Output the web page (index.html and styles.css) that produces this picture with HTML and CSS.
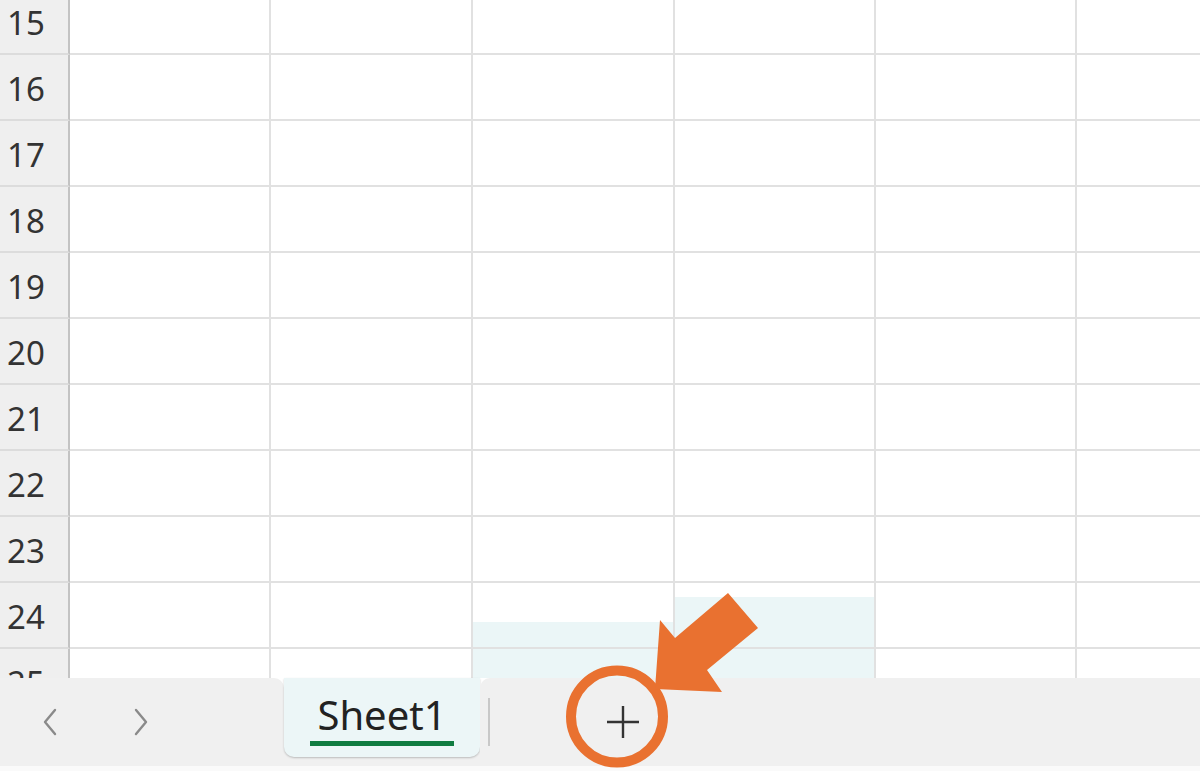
FILE: index.html
```html
<!DOCTYPE html>
<html lang="ja">
<head>
<meta charset="utf-8">
<title>Sheet</title>
<link rel="stylesheet" href="styles.css">
</head>
<body>
<div class="app">
  <div class="gridwrap">
    <div class="grid">
      <div class="rh">15</div><div class="c"></div><div class="c"></div><div class="c"></div><div class="c"></div><div class="c"></div><div class="c"></div>
      <div class="rh">16</div><div class="c"></div><div class="c"></div><div class="c"></div><div class="c"></div><div class="c"></div><div class="c"></div>
      <div class="rh">17</div><div class="c"></div><div class="c"></div><div class="c"></div><div class="c"></div><div class="c"></div><div class="c"></div>
      <div class="rh">18</div><div class="c"></div><div class="c"></div><div class="c"></div><div class="c"></div><div class="c"></div><div class="c"></div>
      <div class="rh">19</div><div class="c"></div><div class="c"></div><div class="c"></div><div class="c"></div><div class="c"></div><div class="c"></div>
      <div class="rh">20</div><div class="c"></div><div class="c"></div><div class="c"></div><div class="c"></div><div class="c"></div><div class="c"></div>
      <div class="rh">21</div><div class="c"></div><div class="c"></div><div class="c"></div><div class="c"></div><div class="c"></div><div class="c"></div>
      <div class="rh">22</div><div class="c"></div><div class="c"></div><div class="c"></div><div class="c"></div><div class="c"></div><div class="c"></div>
      <div class="rh">23</div><div class="c"></div><div class="c"></div><div class="c"></div><div class="c"></div><div class="c"></div><div class="c"></div>
      <div class="rh">24</div><div class="c"></div><div class="c"></div><div class="c"><div class="fill fill-low"></div></div><div class="c"><div class="fill fill-high"></div></div><div class="c"></div><div class="c"></div>
      <div class="rh">25</div><div class="c"></div><div class="c"></div><div class="c"><div class="fill fill-full"></div></div><div class="c"><div class="fill fill-full"></div></div><div class="c"></div><div class="c"></div>
    </div>
  </div>
  <div class="tabbar">
    <div class="seg seg-left">
      <button class="nav" aria-label="前へ">
        <svg width="20" height="30" viewBox="0 0 20 30"><path d="M15 3 L5 15 L15 27" fill="none" stroke="#8a8a8a" stroke-width="2.4" stroke-linecap="round" stroke-linejoin="round"/></svg>
      </button>
      <button class="nav" aria-label="次へ">
        <svg width="20" height="30" viewBox="0 0 20 30"><path d="M5 3 L15 15 L5 27" fill="none" stroke="#8a8a8a" stroke-width="2.4" stroke-linecap="round" stroke-linejoin="round"/></svg>
      </button>
    </div>
    <div class="tabslot">
      <div class="tab"><span class="tabname">Sheet1</span></div>
    </div>
    <div class="seg seg-right">
      <div class="sep"></div>
      <button class="add" aria-label="シートの追加">
        <svg width="34" height="34" viewBox="0 0 34 34"><path d="M17 1 V33 M1 17 H33" stroke="#333" stroke-width="2.4"/></svg>
      </button>
    </div>
  </div>
  <div class="strip"></div>
  <svg class="callout" width="1200" height="771" viewBox="0 0 1200 771">
    <circle cx="617" cy="716.5" r="46" fill="none" stroke="#e97130" stroke-width="10"/>
    <polygon points="655,689 660,620 675,638 728,593 758,628 707,670 722,692" fill="#e97130"/>
  </svg>
</div>
</body>
</html>
```

FILE: styles.css
```css
* { box-sizing: border-box; }
html, body { margin: 0; padding: 0; }
body {
  width: 1200px;
  height: 771px;
  overflow: hidden;
  background: #ffffff;
  font-family: "Noto Sans", "Liberation Sans", sans-serif;
}
.app {
  position: relative;
  width: 1200px;
  height: 771px;
  display: flex;
  flex-direction: column;
}
.gridwrap {
  height: 678px;
  overflow: hidden;
  flex: none;
}
.grid {
  margin-top: -11px;
  display: grid;
  grid-template-columns: 70px 201px 202px 202px 201px 201px 201px;
  grid-auto-rows: 66px;
}
.rh {
  background: #efefef;
  border-right: 2px solid #c3c3c3;
  border-bottom: 2px solid #dcdcdc;
  color: #333333;
  font-size: 33px;
  line-height: 1;
  padding-left: 7px;
  padding-top: 2px;
  display: flex;
  align-items: center;
}
.c {
  border-right: 2px solid #e1e1e1;
  border-bottom: 2px solid #e1e1e1;
  display: flex;
  flex-direction: column;
  justify-content: flex-end;
}
.fill { background: #ebf6f7; }
.fill-low { height: 25px; }
.fill-high { height: 50px; }
.fill-full { height: 100%; }

.tabbar {
  height: 88px;
  display: flex;
  flex: none;
}
.seg {
  background: #f0f0f0;
  display: flex;
  align-items: center;
}
.seg-left {
  width: 284px;
  border-top-right-radius: 10px;
  padding-left: 40px;
  gap: 71px;
}
.nav {
  border: 0;
  background: none;
  padding: 0;
  width: 20px;
  height: 30px;
  display: flex;
}
.tabslot {
  width: 196px;
  background: #f0f0f0;
}
.tab {
  height: 79px;
  background: #ecf6f7;
  border-bottom-left-radius: 10px;
  border-bottom-right-radius: 10px;
  box-shadow: 0 1px 2px rgba(0, 0, 0, 0.22);
  display: flex;
  justify-content: center;
  align-items: flex-start;
  padding-top: 13px;
}
.tabname {
  font-size: 40px;
  line-height: 48px;
  color: #222222;
  padding: 0 0 2px;
  border-bottom: 5px solid #107c41;
  width: 144px;
  text-align: center;
}
.seg-right {
  flex: 1;
  border-top-left-radius: 10px;
  padding-left: 8px;
}
.sep {
  width: 2px;
  height: 48px;
  background: #c8c8c8;
}
.add {
  margin-left: 116px;
  border: 0;
  background: none;
  padding: 0;
  width: 34px;
  height: 34px;
  display: flex;
}
.strip {
  height: 5px;
  background: #fafafa;
  flex: none;
}
.callout {
  position: absolute;
  left: 0;
  top: 0;
  pointer-events: none;
}
```
